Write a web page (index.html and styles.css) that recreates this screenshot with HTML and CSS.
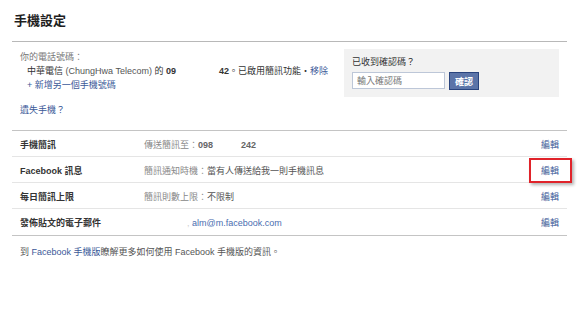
FILE: index.html
```html
<!DOCTYPE html>
<html lang="zh-Hant">
<head>
  <meta charset="UTF-8">
  <title>手機設定</title>
  <link rel="stylesheet" href="styles.css">
</head>
<body>

<div class="mobile-settings">
  <h2 class="page-title">手機設定</h2>

  <div class="phone-section">
    <div class="phone-info">
      <div class="label">你的電話號碼：</div>
      <div class="phone-line">中華電信 <span class="carrier">(ChungHwa Telecom)</span> 的 <b>09</b><span class="masked"></span><b>42</b>。已啟用簡訊功能・<a href="#">移除</a></div>
      <div class="phone-line"><a href="#">+ 新增另一個手機號碼</a></div>
      <div class="lost-phone"><a href="#">遺失手機？</a></div>
    </div>

    <div class="confirm-box">
      <div class="confirm-title">已收到確認碼？</div>
      <div class="confirm-form">
        <input type="text" placeholder="輸入確認碼">
        <button>確認</button>
      </div>
    </div>
  </div>

  <div class="settings-table">
    <div class="settings-row">
      <div class="row-name">手機簡訊</div>
      <div class="row-value">傳送簡訊至：<span class="num">098</span><span class="masked short"></span><span class="num">242</span></div>
      <a class="edit" href="#">編輯</a>
    </div>
    <div class="settings-row">
      <div class="row-name">Facebook 訊息</div>
      <div class="row-value">簡訊通知時機：<span class="strong">當有人傳送給我一則手機訊息</span></div>
      <a class="edit highlighted" href="#">編輯</a>
    </div>
    <div class="settings-row">
      <div class="row-name">每日簡訊上限</div>
      <div class="row-value">簡訊則數上限：<span class="strong">不限制</span></div>
      <a class="edit" href="#">編輯</a>
    </div>
    <div class="settings-row">
      <div class="row-name">發佈貼文的電子郵件</div>
      <div class="row-value email"><span class="dot">,</span> <a href="#">alm@m.facebook.com</a></div>
      <a class="edit" href="#">編輯</a>
    </div>
  </div>

  <p class="footer-note">到 <a href="#">Facebook 手機版</a>瞭解更多如何使用 Facebook 手機版的資訊。</p>
</div>

</body>
</html>
```

FILE: styles.css
```css
body {
  margin: 0;
  background: #fff;
  font-family: "Liberation Sans", "Noto Sans CJK TC", sans-serif;
  font-size: 9px;
  color: #333;
}

a {
  color: #3b5998;
  text-decoration: none;
}

.mobile-settings {
  width: 555px;
  margin-left: 12px;
}

.page-title {
  margin: 0;
  height: 42px;
  padding: 14px 0 0 2px;
  box-sizing: border-box;
  font-size: 13px;
  line-height: 14px;
  font-weight: bold;
  color: #1e1e1e;
  border-bottom: 1px solid #b8b8b8;
}

.phone-section {
  display: flex;
  justify-content: space-between;
  align-items: flex-start;
  padding: 8px 8px 0 8px;
  border-bottom: 1px solid #c4c4c4;
}

.phone-info {
  line-height: 14px;
  padding-bottom: 13px;
}

.phone-info .label {
  color: #777;
}

.phone-line {
  padding-left: 7px;
  color: #333;
}

.phone-line .carrier {
  color: #555;
}

.masked {
  display: inline-block;
  width: 43px;
}

.masked.short {
  width: 28px;
}

.lost-phone {
  margin-top: 11px;
}

.confirm-box {
  width: 215px;
  margin-top: -1px;
  padding: 7px 8px 7px 8px;
  box-sizing: border-box;
  background: #f2f2f2;
}

.confirm-title {
  line-height: 12px;
  color: #333;
}

.confirm-form {
  display: flex;
  align-items: flex-start;
  gap: 4px;
  margin-top: 4px;
}

.confirm-form input {
  width: 93px;
  height: 17px;
  box-sizing: border-box;
  margin: 0;
  padding: 0 4px;
  border: 1px solid #bdc7d8;
  font-family: inherit;
  font-size: 9px;
  color: #777;
  background: #fff;
}

.confirm-form input::placeholder {
  color: #777;
}

.confirm-form button {
  height: 18px;
  width: 30px;
  padding: 0;
  border: 1px solid #29447e;
  background: #5b74a8;
  color: #fff;
  font-family: inherit;
  font-size: 9px;
  font-weight: bold;
}

.settings-table {
  border-bottom: 1px solid #c4c4c4;
}

.settings-row {
  display: grid;
  grid-template-columns: 124px 1fr auto;
  align-items: center;
  height: 26px;
  padding: 1px 8px 0;
  box-sizing: border-box;
  border-bottom: 1px solid #e5e5e5;
}

.settings-row:last-child {
  border-bottom: none;
}

.row-name {
  font-weight: bold;
  color: #333;
}

.row-value {
  color: #888;
}

.row-value .num {
  color: #666;
  font-weight: bold;
}

.row-value .strong {
  color: #555;
}

.row-value.email {
  padding-left: 43px;
}

.row-value.email .dot {
  color: #ccc;
}

.row-value.email a {
  color: #4a6db0;
}

.edit {
  position: relative;
}

.edit.highlighted::after {
  content: "";
  position: absolute;
  left: -12px;
  right: -13px;
  top: -6px;
  bottom: -6px;
  border: 2px solid #e0232a;
  box-shadow: 2px 2px 3px rgba(0, 0, 0, 0.3);
}

.footer-note {
  margin: 10px 0 0 8px;
  line-height: 12px;
  color: #555;
}
```
